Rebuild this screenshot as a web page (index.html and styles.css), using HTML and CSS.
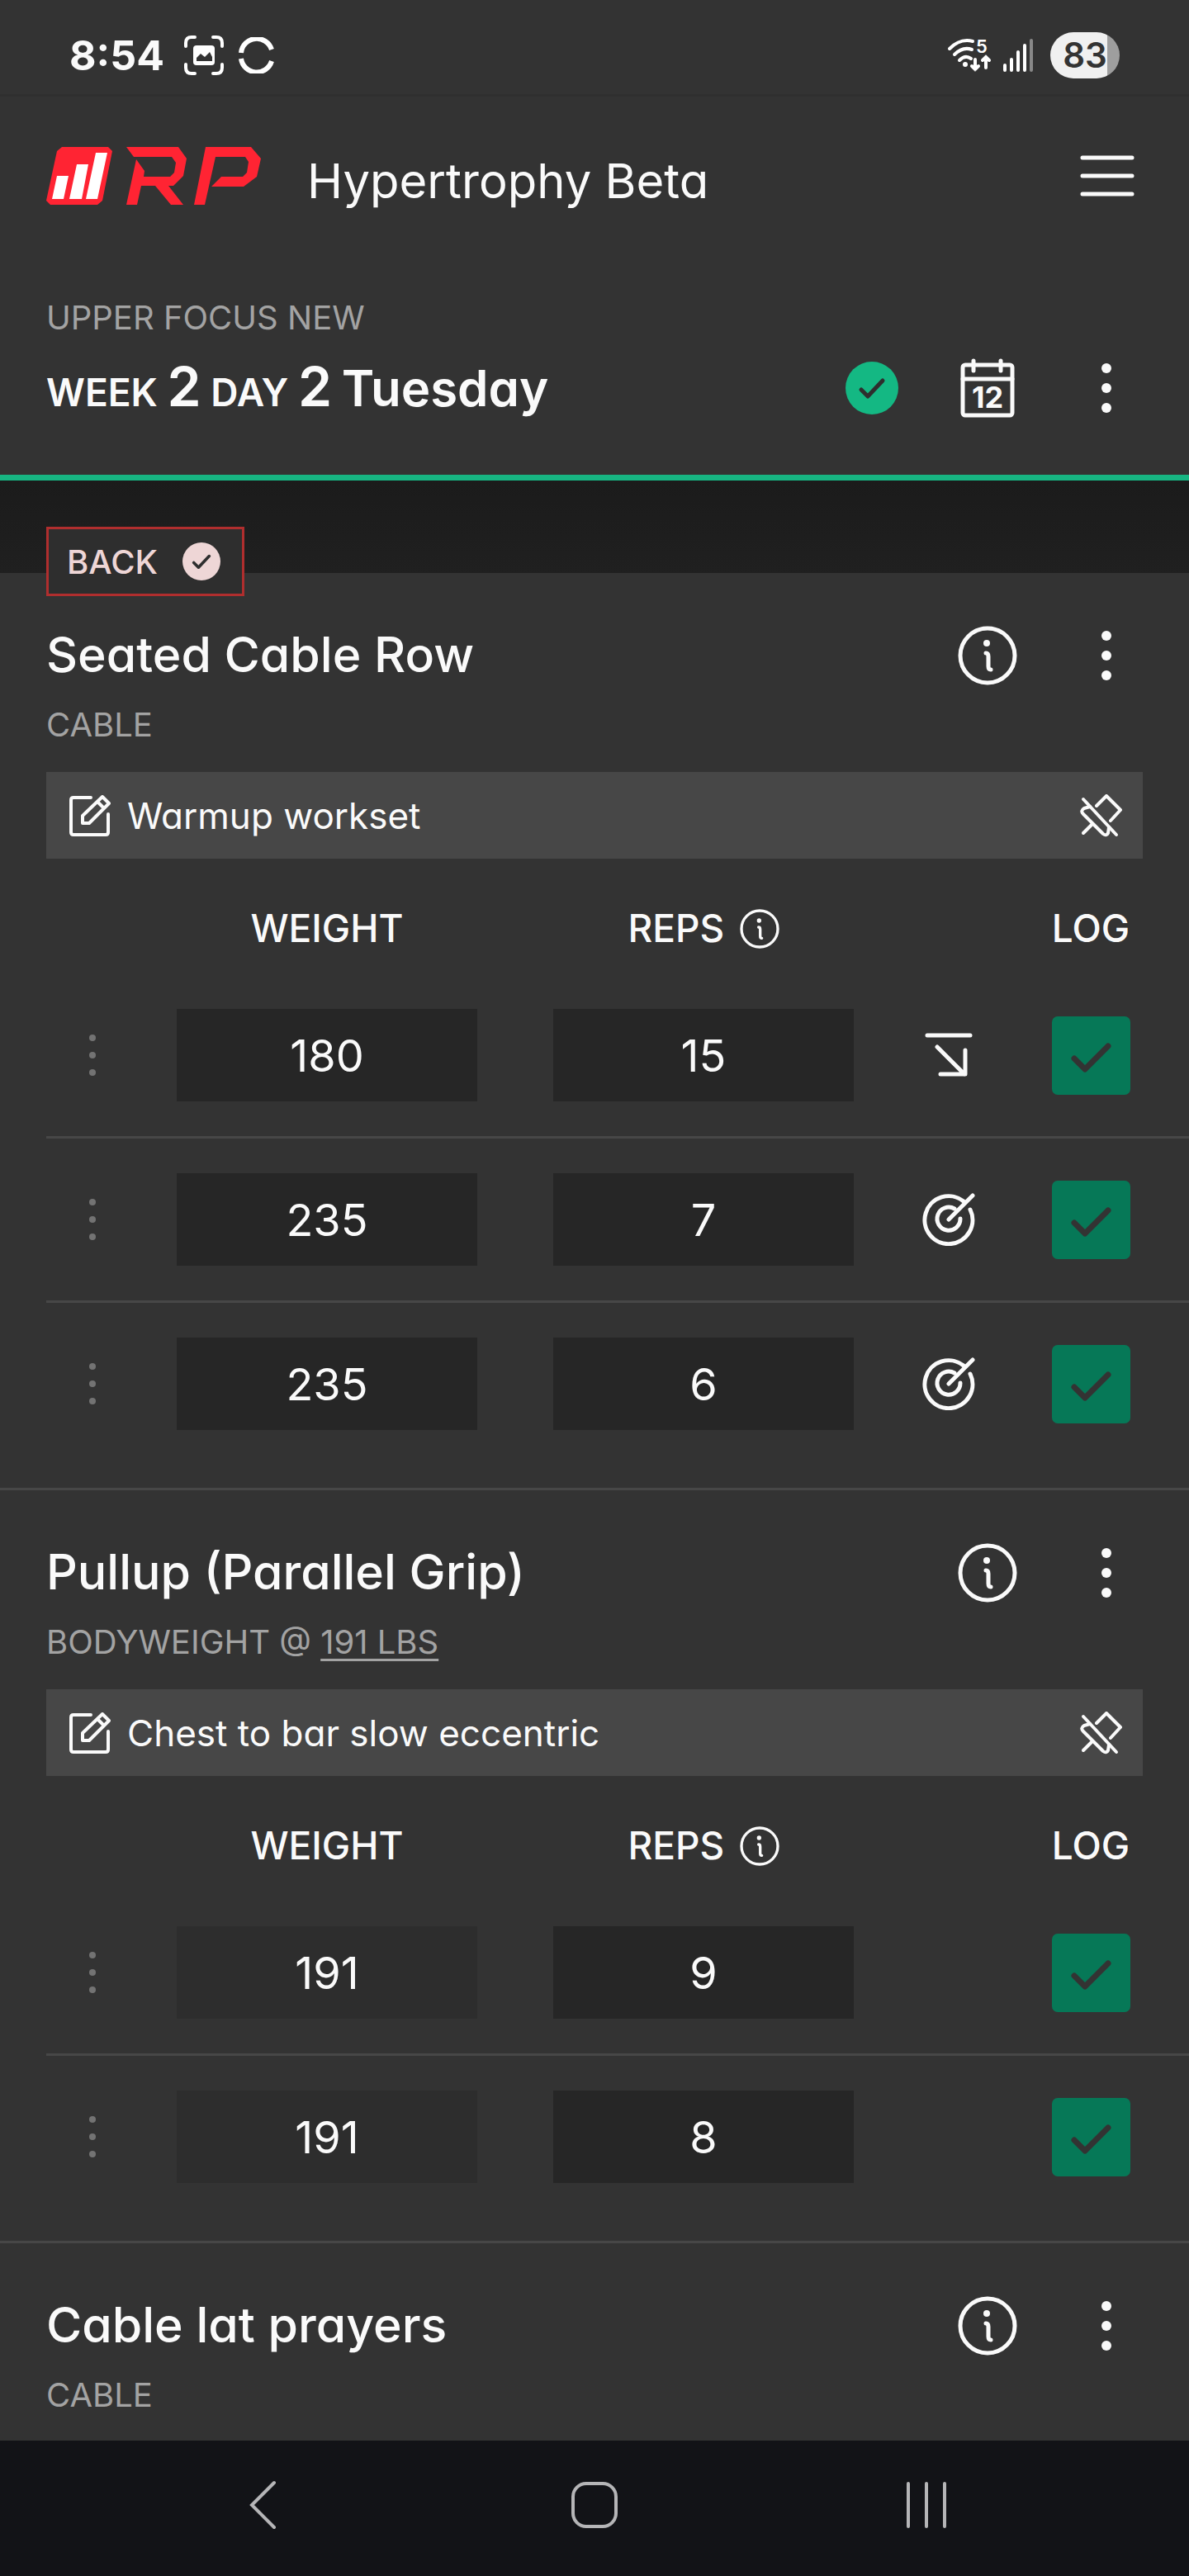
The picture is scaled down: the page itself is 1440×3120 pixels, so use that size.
FILE: index.html
```html
<!DOCTYPE html>
<html lang="en">

<head>
    <meta charset="UTF-8">
    <meta name="viewport" content="width=device-width, initial-scale=1.0">
    <title>RP Hypertrophy Beta</title>
    <link rel="stylesheet" href="styles.css">
</head>

<body>
    <!-- Shared icons -->
    <svg class="sprite" aria-hidden="true">
        <symbol id="icon-info" viewBox="0 0 72 72">
            <circle cx="36" cy="36" r="33" fill="none" stroke="currentColor" stroke-width="5" />
            <circle cx="35" cy="21" r="4" fill="currentColor" />
            <path d="M34 33q3 0 3 4v12q0 4 3 4" fill="none" stroke="currentColor" stroke-width="5" stroke-linecap="round" />
        </symbol>
        <symbol id="icon-more" viewBox="0 0 12 60">
            <circle cx="6" cy="6" r="6" fill="currentColor" />
            <circle cx="6" cy="30" r="6" fill="currentColor" />
            <circle cx="6" cy="54" r="6" fill="currentColor" />
        </symbol>
        <symbol id="icon-drag" viewBox="0 0 8 50">
            <circle cx="4" cy="4" r="4" fill="currentColor" />
            <circle cx="4" cy="25" r="4" fill="currentColor" />
            <circle cx="4" cy="46" r="4" fill="currentColor" />
        </symbol>
        <symbol id="icon-done" viewBox="0 0 64 64">
            <circle cx="32" cy="32" r="32" fill="currentColor" />
            <path d="M19 34l8 8l18-19" fill="none" stroke="#2e2e2e" stroke-width="5" stroke-linecap="round" stroke-linejoin="round" />
        </symbol>
        <symbol id="icon-edit" viewBox="0 0 50 50">
            <g fill="none" stroke="currentColor" stroke-width="4" stroke-linecap="round" stroke-linejoin="round">
                <path d="M26 3H5q-3 0-3 3v39q0 3 3 3h39q3 0 3-3V23" />
                <path d="M16 25L40 2l8 8l-24 24h-8z M34 8l8 8" />
            </g>
        </symbol>
        <symbol id="icon-unpin" viewBox="0 0 52 52">
            <g fill="none" stroke="currentColor" stroke-width="4" stroke-linecap="round" stroke-linejoin="round">
                <path d="M4 6l40 43" />
                <path d="M20 14L32 2l17 17l-12 13" />
                <path d="M12 15l-7 2q-5 3-1 7l24 24q4 3 6-1l1-7" />
                <path d="M15 36L4 47" />
            </g>
        </symbol>
        <symbol id="icon-target" viewBox="0 0 64 64">
            <g fill="none" stroke="currentColor" stroke-width="5" stroke-linecap="round">
                <path d="M50 10A29 29 0 1 0 58 20" />
                <path d="M39 19A14 14 0 1 0 46 31" />
                <path d="M32 32L61 3" />
            </g>
        </symbol>
        <symbol id="icon-drop" viewBox="0 0 60 54">
            <g fill="none" stroke="currentColor" stroke-width="5" stroke-linecap="round" stroke-linejoin="round">
                <path d="M4 3h52M16 17l33 33M20 50h30V21" />
            </g>
        </symbol>
    </svg>

    <div class="status-bar">
        <span class="clock">8:54</span>
        <svg width="48" height="48" viewBox="0 0 48 48" aria-hidden="true">
            <path d="M2 13V9q0-7 7-7h4M35 2h4q7 0 7 7v4M46 35v4q0 7-7 7h-4M13 46H9q-7 0-7-7v-4" fill="none" stroke="#fff" stroke-width="4" stroke-linecap="round" />
            <rect x="11" y="12" width="26" height="24" rx="4" fill="#fff" />
            <path d="M15 31v-4l5-5l5 4l6-6l3 6v5z" fill="#333" />
        </svg>
        <svg width="44" height="44" viewBox="0 0 44 44" aria-hidden="true">
            <path d="M3 19A19 19 0 0 1 40 15M3 26A19 19 0 0 0 40 29" fill="none" stroke="#fff" stroke-width="6" />
        </svg>
        <div class="status-right">
            <svg class="wifi" width="54" height="42" viewBox="0 0 54 42" aria-hidden="true">
                <g fill="none" stroke="#fff" stroke-width="4" stroke-linecap="round">
                    <path d="M2 13Q15 0 30 4" />
                    <path d="M8 20Q18 10 29 14" />
                    <path d="M14 27Q21 20 28 25" />
                    <path d="M33 26v12M29 34l4 4l4-4M46 36V23M42 27l4-4l4 4" />
                </g>
                <circle cx="21" cy="32" r="3" fill="#fff" />
                <text x="34" y="18" class="wifi-band">5</text>
            </svg>
            <svg width="38" height="42" viewBox="0 0 38 42" aria-hidden="true">
                <g stroke="#fff" stroke-width="4" stroke-linecap="round">
                    <path d="M3 33v6M11 26v13M19 17v22M27 9v30" />
                    <path d="M35 3v36" stroke="#888" />
                </g>
            </svg>
            <span class="battery">83</span>
        </div>
    </div>

    <header class="app-header">
        <svg class="logo" width="260" height="70" viewBox="0 0 260 70" role="img" aria-label="RP">
            <path d="M19 0h56l5 5l-12 60l-6 5H5l-5-5L13 5z" fill="#ff2433" />
            <path d="M13 35h14l-6 28H7zM37 21h14l-8 42H28zM60 7h14L62 63H48z" fill="#fff" />
            <path d="M97 0h63l10 14l-4 21l-12 12h-6l18 23h-15l-19-23h-17l-5 23H97l12-55l10 14l-1 7h32l5-5l2-12l-5-7h-46z" fill="#ff2433" />
            <path d="M193 0h55l12 14l-5 22l-16 12h-39l12-12h26l5-5l2-13l-4-6h-36l-13 58h-13z" fill="#ff2433" />
        </svg>
        <h1>Hypertrophy Beta</h1>
        <button class="menu-button" type="button" aria-label="Menu">
            <svg width="66" height="52" viewBox="0 0 66 52" aria-hidden="true">
                <path d="M3 4h60M3 26h60M3 48h60" stroke="#fafafa" stroke-width="5" stroke-linecap="round" />
            </svg>
        </button>
    </header>

    <div class="workout-header">
        <p class="meso-name">UPPER FOCUS NEW</p>
        <div class="workout-row">
            <h2>WEEK <b>2</b> DAY <b>2</b> <span>Tuesday</span></h2>
            <svg class="done-icon"><use href="#icon-done" /></svg>
            <button class="icon-button" type="button" aria-label="Calendar">
                <svg width="66" height="72" viewBox="0 0 66 72" aria-hidden="true">
                    <rect x="3" y="8" width="60" height="61" rx="3" fill="none" stroke="#fafafa" stroke-width="5" />
                    <path d="M3 25h60M16 3v12M49 3v12" stroke="#fafafa" stroke-width="5" stroke-linecap="round" />
                    <text x="33" y="60" class="calendar-day">12</text>
                </svg>
            </button>
            <button class="icon-button" type="button" aria-label="Workout options">
                <svg class="more-icon"><use href="#icon-more" /></svg>
            </button>
        </div>
    </div>

    <div class="muscle-strip">
        <div class="muscle-badge">
            BACK
            <svg><use href="#icon-done" /></svg>
        </div>
    </div>

    <main>
        <section class="exercise">
            <div class="exercise-head">
                <h3>Seated Cable Row</h3>
                <button class="icon-button" type="button" aria-label="Exercise info">
                    <svg class="info-icon"><use href="#icon-info" /></svg>
                </button>
                <button class="icon-button" type="button" aria-label="Exercise options">
                    <svg class="more-icon"><use href="#icon-more" /></svg>
                </button>
            </div>
            <p class="equipment">CABLE</p>
            <div class="note">
                <svg class="edit-icon"><use href="#icon-edit" /></svg>
                <span>Warmup workset</span>
                <button type="button" aria-label="Unpin note"><svg class="unpin-icon"><use href="#icon-unpin" /></svg></button>
            </div>
            <table class="sets">
                <thead>
                    <tr>
                        <th class="col-drag"></th>
                        <th>WEIGHT</th>
                        <th>REPS <svg class="reps-info"><use href="#icon-info" /></svg></th>
                        <th class="col-type"></th>
                        <th class="col-log">LOG</th>
                    </tr>
                </thead>
                <tbody>
                    <tr>
                        <td><svg class="drag-icon"><use href="#icon-drag" /></svg></td>
                        <td><input type="text" value="180" aria-label="Weight, set 1"></td>
                        <td><input type="text" value="15" aria-label="Reps, set 1"></td>
                        <td><svg class="drop-icon"><use href="#icon-drop" /></svg></td>
                        <td class="col-log"><input type="checkbox" checked aria-label="Log set 1"></td>
                    </tr>
                    <tr>
                        <td><svg class="drag-icon"><use href="#icon-drag" /></svg></td>
                        <td><input type="text" value="235" aria-label="Weight, set 2"></td>
                        <td><input type="text" value="7" aria-label="Reps, set 2"></td>
                        <td><svg class="target-icon"><use href="#icon-target" /></svg></td>
                        <td class="col-log"><input type="checkbox" checked aria-label="Log set 2"></td>
                    </tr>
                    <tr>
                        <td><svg class="drag-icon"><use href="#icon-drag" /></svg></td>
                        <td><input type="text" value="235" aria-label="Weight, set 3"></td>
                        <td><input type="text" value="6" aria-label="Reps, set 3"></td>
                        <td><svg class="target-icon"><use href="#icon-target" /></svg></td>
                        <td class="col-log"><input type="checkbox" checked aria-label="Log set 3"></td>
                    </tr>
                </tbody>
            </table>
        </section>

        <section class="exercise">
            <div class="exercise-head">
                <h3>Pullup (Parallel Grip)</h3>
                <button class="icon-button" type="button" aria-label="Exercise info">
                    <svg class="info-icon"><use href="#icon-info" /></svg>
                </button>
                <button class="icon-button" type="button" aria-label="Exercise options">
                    <svg class="more-icon"><use href="#icon-more" /></svg>
                </button>
            </div>
            <p class="equipment">BODYWEIGHT @ <a href="#bodyweight">191 LBS</a></p>
            <div class="note">
                <svg class="edit-icon"><use href="#icon-edit" /></svg>
                <span>Chest to bar slow eccentric</span>
                <button type="button" aria-label="Unpin note"><svg class="unpin-icon"><use href="#icon-unpin" /></svg></button>
            </div>
            <table class="sets">
                <thead>
                    <tr>
                        <th class="col-drag"></th>
                        <th>WEIGHT</th>
                        <th>REPS <svg class="reps-info"><use href="#icon-info" /></svg></th>
                        <th class="col-type"></th>
                        <th class="col-log">LOG</th>
                    </tr>
                </thead>
                <tbody>
                    <tr>
                        <td><svg class="drag-icon"><use href="#icon-drag" /></svg></td>
                        <td><input type="text" value="191" readonly aria-label="Weight, set 1"></td>
                        <td><input type="text" value="9" aria-label="Reps, set 1"></td>
                        <td></td>
                        <td class="col-log"><input type="checkbox" checked aria-label="Log set 1"></td>
                    </tr>
                    <tr>
                        <td><svg class="drag-icon"><use href="#icon-drag" /></svg></td>
                        <td><input type="text" value="191" readonly aria-label="Weight, set 2"></td>
                        <td><input type="text" value="8" aria-label="Reps, set 2"></td>
                        <td></td>
                        <td class="col-log"><input type="checkbox" checked aria-label="Log set 2"></td>
                    </tr>
                </tbody>
            </table>
        </section>

        <section class="exercise">
            <div class="exercise-head">
                <h3>Cable lat prayers</h3>
                <button class="icon-button" type="button" aria-label="Exercise info">
                    <svg class="info-icon"><use href="#icon-info" /></svg>
                </button>
                <button class="icon-button" type="button" aria-label="Exercise options">
                    <svg class="more-icon"><use href="#icon-more" /></svg>
                </button>
            </div>
            <p class="equipment">CABLE</p>
        </section>
    </main>

    <nav class="system-nav">
        <button type="button" aria-label="Back">
            <svg width="56" height="60" viewBox="0 0 56 60"><path d="M42 3L15 30l27 27" /></svg>
        </button>
        <button type="button" aria-label="Home">
            <svg width="60" height="60" viewBox="0 0 60 60"><rect x="4" y="4" width="52" height="52" rx="16" /></svg>
        </button>
        <button type="button" aria-label="Recent apps">
            <svg width="56" height="60" viewBox="0 0 56 60"><path d="M6 4v52M28 4v52M50 4v52" /></svg>
        </button>
    </nav>
</body>

</html>
```
FILE: styles.css
```css
* {
    box-sizing: border-box;
}

body {
    margin: 0;
    min-height: 100vh;
    display: flex;
    flex-direction: column;
    font-family: Inter, "Liberation Sans", sans-serif;
    font-feature-settings: "cv11";
    background: #333;
    color: #fafafa;
}

h1,
h2,
h3,
p {
    margin: 0;
}

svg {
    display: block;
}

button {
    padding: 0;
    border: 0;
    background: none;
    color: inherit;
    font: inherit;
    cursor: pointer;
}

.sprite {
    display: none;
}

/* Phone status bar */
.status-bar {
    display: flex;
    flex-shrink: 0;
    align-items: center;
    height: 117px;
    padding: 20px 84px 0;
    border-bottom: 3px solid #2f2f2f;
}

.clock {
    margin-right: 24px;
    font-size: 50px;
    font-weight: 700;
}

.status-bar > svg {
    margin-right: 18px;
}

.status-right {
    display: flex;
    align-items: center;
    gap: 12px;
    margin-left: auto;
}

.wifi {
    overflow: visible;
}

.wifi-band {
    font-size: 22px;
    font-weight: 600;
    fill: #fff;
}

.battery {
    width: 84px;
    height: 56px;
    margin-left: 8px;
    border-radius: 28px;
    background: linear-gradient(90deg, #f0f0f0 69px, #9e9e9e 69px);
    color: #333;
    font-size: 42px;
    font-weight: 600;
    line-height: 56px;
    text-align: center;
}

/* App header */
.app-header {
    display: flex;
    flex-shrink: 0;
    align-items: center;
    height: 192px;
    padding: 0 66px 0 56px;
}

.app-header h1 {
    padding: 12px 0 0 56px;
    font-size: 58px;
    font-weight: 400;
}

.menu-button {
    margin-left: auto;
}

/* Workout header */
.workout-header {
    padding: 43px 28px 53px 56px;
    border-bottom: 7px solid #17b582;
}

.meso-name,
.equipment {
    color: #a3a3a3;
    font-size: 40px;
}

.meso-name {
    line-height: 66px;
}

.workout-row {
    display: flex;
    align-items: center;
    height: 104px;
}

.workout-row h2 {
    margin-right: auto;
    padding-bottom: 4px;
    font-size: 46px;
    font-weight: 600;
}

.workout-row b {
    font-size: 66px;
    font-weight: 600;
}

.workout-row span {
    font-size: 60px;
}

.done-icon {
    width: 64px;
    height: 64px;
    margin-right: 36px;
    color: #14b883;
}

.icon-button {
    display: flex;
    justify-content: center;
    align-items: center;
    width: 144px;
    height: 88px;
}

.calendar-day {
    font-size: 36px;
    font-weight: 700;
    fill: #fafafa;
    text-anchor: middle;
}

.more-icon {
    width: 12px;
    height: 60px;
}

.info-icon {
    width: 72px;
    height: 72px;
}

/* Muscle group */
.muscle-strip {
    position: relative;
    flex-shrink: 0;
    height: 112px;
    background: linear-gradient(#1b1b1b, #202020);
}

.muscle-badge {
    position: absolute;
    left: 56px;
    bottom: -28px;
    display: flex;
    align-items: center;
    gap: 30px;
    height: 84px;
    padding: 0 26px 0 22px;
    border: 3px solid #b02e2e;
    background: #2e2e2e;
    color: #eed6d6;
    font-size: 40px;
    font-weight: 500;
}

.muscle-badge svg {
    width: 46px;
    height: 46px;
}

/* Exercises */
main {
    flex: 1 0 auto;
}

.exercise {
    padding: 56px 0 28px 56px;
    border-bottom: 3px solid #474747;
}

.exercise:last-child {
    padding-bottom: 14px;
    border-bottom: 0;
}

.exercise-head {
    display: flex;
    align-items: center;
    padding-right: 28px;
}

.exercise-head h3 {
    margin-right: auto;
    padding-bottom: 4px;
    font-size: 59px;
    font-weight: 500;
}

.equipment {
    line-height: 80px;
}

.equipment a {
    color: inherit;
    text-decoration-thickness: 3px;
    text-underline-offset: 6px;
}

.note {
    display: flex;
    align-items: center;
    height: 105px;
    margin: 17px 56px 0 0;
    padding: 0 24px 0 28px;
    background: #474747;
    font-size: 44px;
}

.note span {
    flex: 1;
    margin-left: 20px;
}

.edit-icon {
    width: 50px;
    height: 50px;
}

.unpin-icon {
    width: 52px;
    height: 52px;
}

/* Sets table */
.sets {
    width: 100%;
    margin-top: 28px;
    border-collapse: separate;
    border-spacing: 0;
    table-layout: fixed;
}

.sets th {
    height: 112px;
    padding: 0;
    font-size: 46px;
    font-weight: 500;
}

.sets td {
    height: 199px;
    padding: 0 46px;
    border-bottom: 3px solid #474747;
}

.sets tr:last-child td {
    height: 196px;
    border-bottom: 0;
}

.sets td:first-child,
.sets td:nth-child(4) {
    padding: 0;
}

.sets td svg {
    margin: 0 auto;
}

.sets .col-drag {
    width: 112px;
}

.sets .col-type {
    width: 138px;
}

.sets .col-log {
    width: 222px;
    padding: 0 16px 0 0;
    text-align: center;
}

.reps-info {
    display: inline-block;
    width: 48px;
    height: 48px;
    margin-left: 6px;
    vertical-align: -8px;
}

.sets input[type="text"] {
    display: block;
    width: 100%;
    height: 112px;
    padding: 0;
    border: 0;
    background: #262626;
    color: #fafafa;
    font: inherit;
    font-size: 54px;
    text-align: center;
}

.sets input[readonly] {
    background: #2d2d2d;
}

.sets input[type="checkbox"] {
    appearance: none;
    display: block;
    width: 95px;
    height: 95px;
    margin: 0 auto;
    border-radius: 7px;
    background: #067857 url("data:image/svg+xml,%3Csvg xmlns='http://www.w3.org/2000/svg' viewBox='0 0 95 95'%3E%3Cpath d='M27 51l13 13l28-28' fill='none' stroke='%23333' stroke-width='7' stroke-linecap='round' stroke-linejoin='round'/%3E%3C/svg%3E") center / contain;
}

.drag-icon {
    width: 8px;
    height: 50px;
    color: #737373;
}

.drop-icon {
    width: 60px;
    height: 54px;
}

.target-icon {
    width: 64px;
    height: 64px;
}

/* Phone navigation */
.system-nav {
    display: flex;
    flex-shrink: 0;
    justify-content: space-between;
    align-items: center;
    height: 164px;
    padding: 0 290px 8px;
    background: #121317;
}

.system-nav svg {
    fill: none;
    stroke: #b5b5b7;
    stroke-width: 4;
    stroke-linecap: round;
}
```
